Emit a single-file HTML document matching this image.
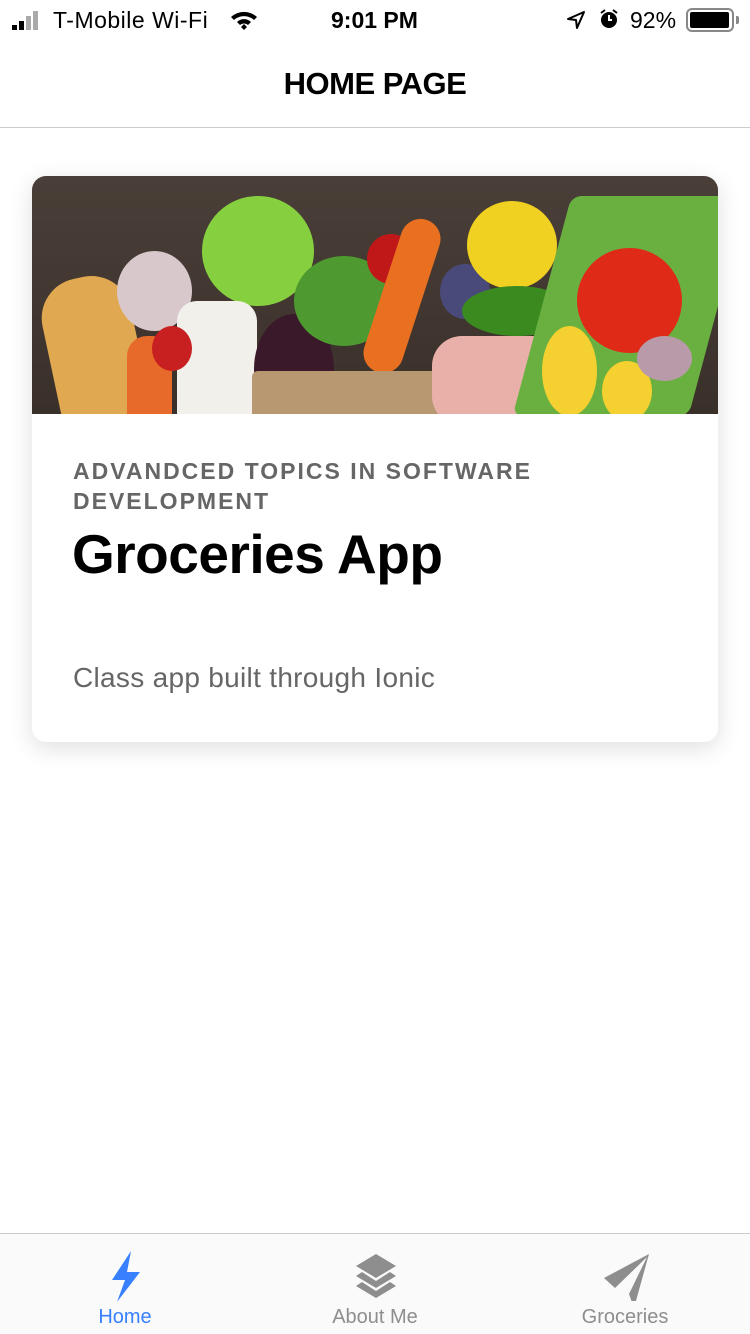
<!DOCTYPE html>
<html><head><meta charset="utf-8"><style>
*{margin:0;padding:0;box-sizing:border-box}
body{width:750px;height:1334px;background:#fff;font-family:"Liberation Sans",sans-serif;position:relative;overflow:hidden}
.sb{position:absolute;top:0;left:0;width:750px;height:40px;font-size:23px;color:#000}
.hdr{position:absolute;top:40px;left:0;width:750px;height:88px;border-bottom:1px solid #ccc;text-align:center;font-size:31px;font-weight:bold;line-height:88px;letter-spacing:-0.5px}
.card{position:absolute;left:32px;top:176px;width:686px;height:566px;border-radius:14px;overflow:hidden;box-shadow:0 6px 24px rgba(0,0,0,0.13)}
.img{position:absolute;left:0;top:0;width:686px;height:238px;background:linear-gradient(180deg,#4a3f38,#3a302a);overflow:hidden}
.img div{position:absolute;border-radius:50%}
.sub{position:absolute;left:41px;top:280px;font-size:23px;font-weight:bold;color:#666;letter-spacing:2px;line-height:30px}
.title{position:absolute;left:40px;top:346px;font-size:55px;font-weight:bold;color:#000;letter-spacing:-0.5px}
.desc{position:absolute;left:41px;top:486px;font-size:28px;color:#666;letter-spacing:0.3px}
.tab{position:absolute;top:1233px;left:0;width:750px;height:101px;border-top:1px solid #ccc;background:#fafafa}
.t{position:absolute;top:72px;font-size:20px;color:#8e8e8e;text-align:center;width:250px}
</style></head><body>
<div class="sb">
<div style="position:absolute;left:12px;top:25px;width:5px;height:5px;background:#000"></div>
<div style="position:absolute;left:19px;top:21px;width:5px;height:9px;background:#000"></div>
<div style="position:absolute;left:26px;top:16px;width:5px;height:14px;background:#aaa"></div>
<div style="position:absolute;left:33px;top:11px;width:5px;height:19px;background:#aaa"></div>
<span style="position:absolute;left:53px;top:7px;letter-spacing:0.5px">T-Mobile Wi-Fi</span>
<svg style="position:absolute;left:229px;top:9px" width="30" height="22" viewBox="0 0 30 22"><path d="M2 8a19 19 0 0 1 26 0l-3 3a15 15 0 0 0-20 0z M8 13a10 10 0 0 1 14 0l-3 3a6 6 0 0 0-8 0z M12 18l3-3 3 3-3 3z" fill="#000"/></svg>
<span style="position:absolute;left:331px;top:7px;font-weight:bold">9:01 PM</span>
<svg style="position:absolute;left:566px;top:10px" width="20" height="20" viewBox="0 0 20 20"><path d="M18 2L2 9l8 1 1 8z" fill="none" stroke="#000" stroke-width="2" stroke-linejoin="round"/></svg>
<svg style="position:absolute;left:598px;top:8px" width="22" height="22" viewBox="0 0 22 22"><circle cx="11" cy="12" r="8" fill="#000"/><path d="M3 5l4-3M19 5l-4-3" stroke="#000" stroke-width="2"/><path d="M11 7v5h3" stroke="#fff" stroke-width="2" fill="none"/></svg>
<span style="position:absolute;left:630px;top:7px">92%</span>
<div style="position:absolute;left:686px;top:8px;width:48px;height:24px;border:2px solid #888;border-radius:6px;padding:2px"><div style="width:39px;height:16px;background:#000;border-radius:2px"></div></div>
<div style="position:absolute;left:736px;top:16px;width:3px;height:8px;background:#888;border-radius:0 2px 2px 0"></div>
</div>
<div class="hdr">HOME PAGE</div>
<div class="card">
<div class="img">
<div style="left:20px;top:100px;width:90px;height:180px;background:#e0a850;border-radius:40px;transform:rotate(-12deg)"></div>
<div style="left:85px;top:75px;width:75px;height:80px;background:#d8c8cc"></div>
<div style="left:95px;top:160px;width:45px;height:110px;background:#e86a2a;border-radius:20px"></div>
<div style="left:170px;top:20px;width:112px;height:110px;background:#86d040"></div>
<div style="left:145px;top:125px;width:80px;height:140px;background:#f2f0ea;border-radius:20px"></div>
<div style="left:120px;top:150px;width:40px;height:45px;background:#c82020"></div>
<div style="left:222px;top:138px;width:80px;height:110px;background:#3a1a2a"></div>
<div style="left:262px;top:80px;width:100px;height:90px;background:#4e9a30"></div>
<div style="left:335px;top:58px;width:48px;height:50px;background:#c01818"></div>
<div style="left:350px;top:40px;width:40px;height:160px;background:#e87020;border-radius:20px;transform:rotate(18deg)"></div>
<div style="left:220px;top:195px;width:230px;height:80px;background:#b89870;border-radius:6px"></div>
<div style="left:408px;top:88px;width:50px;height:55px;background:#4a4a7a"></div>
<div style="left:435px;top:25px;width:90px;height:88px;background:#f0d020"></div>
<div style="left:430px;top:110px;width:110px;height:50px;background:#3a8a20"></div>
<div style="left:400px;top:160px;width:170px;height:90px;background:#e8b0a8;border-radius:30px"></div>
<div style="left:510px;top:20px;width:176px;height:220px;background:#6ab040;border-radius:10px;transform:skewX(-15deg)"></div>
<div style="left:545px;top:72px;width:105px;height:105px;background:#e02a18"></div>
<div style="left:510px;top:150px;width:55px;height:90px;background:#f4d030"></div>
<div style="left:570px;top:185px;width:50px;height:60px;background:#f4d030"></div>
<div style="left:605px;top:160px;width:55px;height:45px;background:#b89aa8"></div>
</div>
<div class="sub">ADVANDCED TOPICS IN SOFTWARE<br>DEVELOPMENT</div>
<div class="title">Groceries App</div>
<div class="desc">Class app built through Ionic</div>
</div>
<div class="tab">
<svg style="position:absolute;left:108px;top:15px" width="36" height="54" viewBox="0 0 36 54"><path d="M23 2L4 31h13L9 53 32 23H19z" fill="#3880ff"/></svg>
<svg style="position:absolute;left:352px;top:18px" width="48" height="48" viewBox="0 0 48 48"><path d="M24 2l20 12-20 12L4 14z" fill="#8e8e8e"/><path d="M4 24l6-4 14 9 14-9 6 4-20 12z" fill="#8e8e8e"/><path d="M4 34l6-4 14 9 14-9 6 4-20 12z" fill="#8e8e8e"/></svg>
<svg style="position:absolute;left:602px;top:17px" width="50" height="50" viewBox="0 0 50 50"><path d="M47 3L2 27l11 10 32-31-18 37 5 14z" fill="#8e8e8e"/></svg>
<div class="t" style="left:0;color:#3880ff">Home</div>
<div class="t" style="left:250px">About Me</div>
<div class="t" style="left:500px">Groceries</div>
</div>
</body></html>
